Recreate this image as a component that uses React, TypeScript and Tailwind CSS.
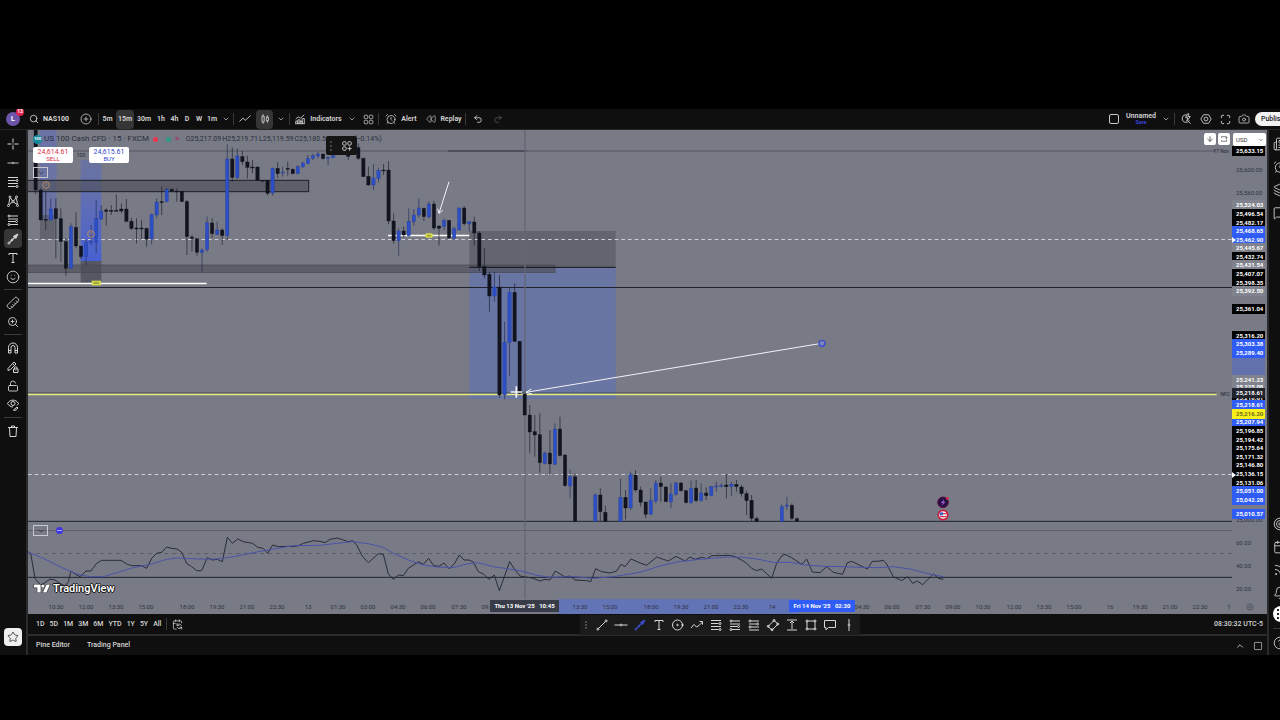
import type { ReactNode } from "react";
import {
  AlarmClock,
  ArrowDown,
  Bell,
  Calendar,
  CalendarSync,
  Camera,
  ChevronDown,
  ChevronUp,
  CircleHelp,
  CirclePlus,
  Layers,
  LockOpen,
  type LucideIcon,
  Maximize,
  MessageSquare,
  Newspaper,
  Redo2,
  Rewind,
  Ruler,
  Rss,
  Search,
  Smile,
  Star,
  Target,
  Undo2,
  ZoomIn,
} from "lucide-react";

/* ---------- icons ---------- */

// all of these are drawn on a 28 x 28 grid
const glyphs: Record<string, ReactNode> = {
  cross: <path d="M14 3v8M14 17v8M3 14h8M17 14h8M14 13.5v1M13.5 14h1" />,
  trend: (
    <>
      <path d="M7.5 20.5l13-13" />
      <circle cx="5.8" cy="22.2" r="2" />
      <circle cx="22.2" cy="5.8" r="2" />
    </>
  ),
  horizontal: (
    <>
      <path d="M1 14h11M16 14h11" />
      <circle cx="14" cy="14" r="1.8" />
    </>
  ),
  arrow: (
    <>
      <path d="M7.5 20.5L20 8" strokeWidth="2.4" />
      <path d="M15 8.5L24 4l-4.500 9z" fill="currentColor" />
      <circle cx="5.8" cy="22.2" r="2" />
      <circle cx="12" cy="16" r="1.6" fill="currentColor" />
    </>
  ),
  fib: (
    <>
      <path d="M4 5h20M4 11h15M4 17h20M4 23h15" />
      <circle cx="22" cy="11" r="2" />
      <circle cx="22" cy="23" r="2" />
    </>
  ),
  pattern: (
    <>
      <path d="M5.5 21l2-12M9 8l4 6M15 14l5-6M21 9l2 12M7 21l6-5M15 16l7 5" />
      <circle cx="5" cy="23" r="2" />
      <circle cx="8" cy="6" r="2" />
      <circle cx="14" cy="15" r="2" />
      <circle cx="21" cy="6" r="2" />
      <circle cx="23" cy="23" r="2" />
    </>
  ),
  position: (
    <>
      <path d="M8 6h16M4 12h20M4 17h14M8 23h16" />
      <circle cx="6" cy="6" r="2" />
      <circle cx="21" cy="17" r="2" />
      <circle cx="6" cy="23" r="2" />
    </>
  ),
  short: (
    <>
      <path d="M8 6h16M4 12h14M8 18h16M4 24h20" />
      <circle cx="6" cy="6" r="2" />
      <circle cx="21" cy="12" r="2" />
      <circle cx="6" cy="18" r="2" />
    </>
  ),
  text: <path d="M6 8V5h16v3M14 5v18M11 23h6" />,
  circle: (
    <>
      <circle cx="13" cy="14" r="10" />
      <circle cx="13" cy="14" r="1.5" />
      <circle cx="23" cy="14" r="1.5" fill="currentColor" />
    </>
  ),
  wave: <path d="M2 20l6-7 5 5 5-3 7-7M19 7h6v6" />,
  rotated: (
    <>
      <path d="M4 17L16 5l8 7-12 12z" />
      <circle cx="4.5" cy="16.5" r="2" />
      <circle cx="16" cy="5" r="2" />
      <circle cx="23.5" cy="12" r="2" />
      <circle cx="12" cy="23.5" r="2" />
    </>
  ),
  range: <path d="M4 4h20M4 24h20M14 6v16M10 10l4-4 4 4" />,
  rect: (
    <>
      <path d="M7 6h14M7 22h14M6 7v14M22 7v14" />
      <circle cx="6" cy="6" r="2" />
      <circle cx="22" cy="6" r="2" />
      <circle cx="6" cy="22" r="2" />
      <circle cx="22" cy="22" r="2" />
    </>
  ),
  callout: <path d="M3 5h22v14H11l-5 5v-5H3z" />,
  vertical: (
    <>
      <path d="M14 2v10M14 16v10" />
      <circle cx="14" cy="14" r="1.8" />
    </>
  ),
  magnet: <path d="M5 24V13a9 9 0 0 1 18 0v11h-5V13a4 4 0 0 0-8 0v11zM5 19h5M18 19h5" />,
  penLock: (
    <>
      <path d="M4 17L16 4l4 4L9 19l-5 2zM13 7l4 4" />
      <path d="M15 18h9v7h-9zM17 18v-2a2.5 2.5 0 0 1 5 0v2M19.5 21v1" />
    </>
  ),
  eye: (
    <>
      <path d="M3 11c5-9 17-9 22 0-1 2-2 3-3 4M3 11c3 5 7 7 11 7" />
      <circle cx="14" cy="11" r="4" />
      <path d="M15 24l7-6 2 2-6 5z" />
    </>
  ),
  trash: <path d="M4 7h20M11 7V4h6v3M7 7l1 18h12l1-18" />,
  line: <path d="M1 20l8-8 6 5L27 6" />,
  candles: <path d="M7 7h5v14H7zM9.500 3v4M9.500 21v4M17 10h5v8h-5zM19.500 5v5M19.500 18v5" />,
  indicators: <path d="M4 14l6-5 5 3 9-8M4 25v-6h5v6M9 25v-9h5v9M14 25v-6h5v6M19 25V13h5v12M3 25h22" />,
  layout: (
    <>
      <rect x="3" y="3" width="9" height="9" rx="3" />
      <rect x="16" y="3" width="9" height="9" rx="3" />
      <rect x="3" y="16" width="9" height="9" rx="3" />
      <rect x="16" y="16" width="9" height="9" rx="3" />
    </>
  ),
  grid: (
    <>
      <rect x="4" y="4" width="8" height="8" rx="2.5" />
      <rect x="16" y="4" width="8" height="8" rx="2.5" />
      <rect x="4" y="16" width="8" height="8" rx="2.5" />
      <path d="M20 15v10M15 20h10" />
    </>
  ),
  quick: <path d="M14 4a9 9 0 1 0 8 13M19 19l6 6M17 2l-4 9h5l-2 8 8-11h-6l3-6z" />,
  hex: (
    <>
      <path d="M8 4h12l6 10-6 10H8L2 14z" />
      <circle cx="14" cy="14" r="4.5" />
    </>
  ),
  full: <path d="M9 4h10M24 10v8M19 24H9M4 18v-8M4 10V6q0-2 2-2h3M19 4h3q2 0 2 2v4M24 18v4q0 2-2 2h-3M9 24H6q-2 0-2-2v-4" />,
  reset: <path d="M5 10V6h18v6M23 16v6H5v-4M19 9l4 3 3-3" />,
};

function Glyph({ name, className = "size-3.5" }: { name: string; className?: string }) {
  return (
    <svg
      viewBox="0 0 28 28"
      className={`shrink-0 ${className}`}
      fill="none"
      stroke="currentColor"
      strokeWidth="2"
      aria-hidden="true"
    >
      {glyphs[name]}
    </svg>
  );
}

/* ---------- chart data ---------- */

// [bar, high, body top, body bottom, low, rising]
type Candle = [number, number, number, number, number, 0 | 1];

const candles: Candle[] = [
  [0, 75, 75, 255, 268, 0], [1, 250, 255, 345, 345, 0], [2, 258, 343, 345, 375, 0],
  [3, 280, 312, 345, 345, 1], [4, 280, 311, 341, 460, 0], [5, 310, 341, 410, 470, 0],
  [6, 400, 410, 490, 512, 0], [7, 355, 365, 490, 492, 1], [8, 322, 367, 423, 430, 0],
  [9, 423, 423, 455, 462, 0], [10, 405, 412, 455, 480, 1], [11, 360, 410, 412, 420, 1],
  [12, 285, 340, 412, 445, 1], [13, 300, 318, 342, 345, 1], [14, 310, 315, 319, 362, 0],
  [15, 300, 316, 318, 330, 0], [16, 268, 316, 318, 318, 0], [17, 295, 312, 318, 325, 0],
  [18, 282, 312, 349, 352, 0], [19, 338, 349, 370, 375, 0], [20, 340, 369, 371, 415, 0],
  [21, 345, 369, 371, 402, 0], [22, 368, 370, 402, 425, 0], [23, 325, 329, 402, 418, 1],
  [24, 280, 291, 330, 340, 1], [25, 245, 290, 292, 330, 0], [26, 250, 252, 290, 292, 1],
  [27, 250, 253, 259, 262, 0], [28, 250, 258, 260, 290, 0], [29, 257, 259, 290, 290, 0],
  [30, 285, 290, 395, 450, 0], [31, 390, 396, 400, 440, 0], [32, 400, 401, 442, 452, 0],
  [33, 430, 435, 443, 500, 1], [34, 335, 353, 434, 440, 1], [35, 340, 354, 386, 398, 0],
  [36, 350, 375, 388, 390, 1], [37, 370, 375, 392, 420, 0], [38, 118, 162, 392, 405, 1],
  [39, 128, 162, 217, 230, 0], [40, 130, 153, 218, 222, 1], [41, 138, 155, 170, 180, 0],
  [42, 152, 171, 187, 220, 0], [43, 165, 186, 188, 205, 0], [44, 184, 186, 226, 228, 0],
  [45, 226, 226, 228, 228, 0], [46, 226, 226, 265, 272, 0], [47, 188, 190, 264, 272, 1],
  [48, 172, 190, 206, 220, 0], [49, 185, 201, 204, 215, 1], [50, 170, 190, 192, 212, 0],
  [51, 190, 193, 206, 208, 0], [52, 180, 185, 206, 208, 1], [53, 170, 174, 186, 188, 1],
  [54, 150, 160, 176, 178, 1], [55, 146, 152, 160, 166, 1], [56, 140, 147, 153, 160, 1],
  [57, 146, 147, 161, 163, 0], [58, 155, 157, 160, 180, 1], [59, 148, 152, 158, 160, 1],
  [62, 148, 150, 154, 165, 0], [64, 115, 128, 160, 165, 0], [65, 158, 160, 215, 216, 0],
  [66, 185, 214, 240, 242, 0], [67, 177, 219, 240, 255, 1], [68, 188, 196, 221, 232, 1],
  [69, 177, 195, 197, 210, 0], [70, 168, 195, 348, 358, 0], [71, 325, 348, 407, 415, 0],
  [72, 370, 378, 407, 452, 1], [73, 365, 378, 390, 398, 0], [74, 310, 349, 392, 395, 1],
  [75, 312, 330, 350, 362, 1], [76, 280, 309, 330, 338, 1], [77, 308, 310, 335, 348, 0],
  [78, 290, 297, 336, 340, 1], [79, 288, 297, 369, 375, 0], [80, 362, 363, 370, 422, 0],
  [81, 340, 346, 364, 375, 1], [82, 345, 346, 399, 402, 0], [83, 365, 371, 400, 405, 1],
  [84, 308, 309, 375, 375, 1], [85, 303, 309, 356, 362, 0], [86, 348, 350, 357, 380, 1],
  [87, 335, 351, 384, 422, 0], [88, 378, 384, 485, 498, 0], [89, 430, 485, 510, 520, 0],
  [90, 500, 508, 573, 620, 0], [91, 500, 546, 573, 590, 1], [92, 510, 546, 870, 878, 0],
  [93, 650, 712, 870, 883, 1], [94, 550, 562, 712, 813, 1], [95, 535, 562, 709, 710, 0],
  [96, 708, 709, 865, 868, 0], [97, 865, 867, 930, 932, 0], [98, 900, 930, 981, 1045, 0],
  [99, 930, 980, 990, 1055, 0], [100, 925, 989, 1073, 1103, 0], [101, 1040, 1044, 1075, 1078, 1],
  [102, 975, 1044, 1077, 1110, 0], [103, 955, 972, 1078, 1080, 1], [104, 935, 972, 1052, 1055, 0],
  [105, 1048, 1050, 1142, 1145, 0], [106, 1093, 1115, 1143, 1180, 1], [107, 1105, 1115, 1249, 1249, 0],
  [111, 1165, 1170, 1249, 1249, 1], [112, 1150, 1170, 1220, 1249, 0], [113, 1202, 1222, 1249, 1249, 0],
  [116, 1120, 1177, 1249, 1249, 1], [117, 1155, 1177, 1209, 1243, 0], [118, 1100, 1108, 1209, 1215, 1],
  [119, 1095, 1110, 1155, 1162, 0], [120, 1145, 1155, 1192, 1205, 0], [121, 1190, 1191, 1228, 1240, 0],
  [122, 1150, 1186, 1228, 1230, 1], [123, 1125, 1134, 1188, 1195, 1], [124, 1115, 1134, 1145, 1190, 0],
  [125, 1144, 1146, 1190, 1192, 0], [126, 1135, 1167, 1191, 1210, 1], [127, 1130, 1134, 1168, 1172, 1],
  [128, 1130, 1134, 1157, 1160, 0], [129, 1155, 1157, 1193, 1195, 0], [130, 1127, 1150, 1193, 1197, 1],
  [131, 1125, 1149, 1187, 1192, 0], [132, 1135, 1164, 1187, 1190, 1], [133, 1147, 1164, 1172, 1185, 0],
  [134, 1143, 1145, 1172, 1174, 1], [135, 1130, 1143, 1145, 1160, 1], [136, 1135, 1141, 1144, 1147, 1],
  [137, 1107, 1140, 1145, 1180, 0], [138, 1130, 1138, 1145, 1173, 1], [139, 1125, 1138, 1145, 1160, 0],
  [140, 1140, 1146, 1166, 1175, 0], [141, 1157, 1166, 1187, 1230, 0], [142, 1170, 1186, 1240, 1249, 0],
  [143, 1235, 1241, 1249, 1249, 0], [148, 1198, 1205, 1249, 1249, 1], [149, 1175, 1200, 1204, 1215, 1],
  [150, 1195, 1201, 1240, 1245, 0], [151, 1238, 1241, 1249, 1249, 0],
];

const rsi =
  "84,1340 92,1345 105,1420 122,1440 135,1433 150,1422 165,1425 180,1435 195,1443 205,1430 213,1398 225,1407 240,1415 258,1398 273,1398 290,1375 305,1366 363,1366 380,1377 395,1382 425,1382 440,1390 455,1360 470,1345 485,1342 500,1326 515,1330 531,1332 545,1342 560,1375 575,1385 590,1397 605,1397 622,1358 637,1365 652,1363 667,1370 682,1297 697,1315 713,1302 730,1310 758,1315 773,1327 790,1330 803,1345 818,1320 834,1325 864,1324 880,1325 895,1322 910,1315 940,1307 960,1309 975,1313 990,1303 1012,1299 1030,1305 1045,1310 1058,1307 1070,1320 1088,1355 1105,1373 1135,1346 1150,1348 1165,1407 1180,1423 1195,1410 1210,1412 1225,1390 1240,1380 1255,1370 1270,1378 1286,1360 1301,1382 1317,1384 1332,1374 1347,1391 1362,1378 1378,1350 1392,1365 1407,1365 1420,1371 1435,1400 1450,1407 1467,1423 1483,1410 1498,1457 1513,1415 1529,1370 1545,1395 1560,1413 1600,1420 1620,1428 1635,1423 1650,1425 1666,1398 1695,1416 1710,1413 1725,1425 1760,1427 1772,1430 1787,1391 1805,1400 1830,1404 1850,1398 1863,1378 1875,1385 1893,1362 1923,1375 1940,1381 1970,1356 1990,1363 2005,1368 2028,1354 2055,1368 2070,1356 2085,1363 2105,1357 2120,1361 2135,1352 2190,1351 2205,1355 2225,1365 2240,1375 2255,1390 2270,1397 2285,1392 2315,1420 2330,1375 2345,1353 2355,1348 2375,1358 2405,1378 2420,1362 2437,1401 2460,1403 2480,1385 2500,1402 2528,1408 2542,1373 2555,1369 2580,1381 2602,1392 2617,1369 2632,1369 2650,1366 2660,1377 2680,1415 2705,1427 2723,1415 2738,1435 2752,1428 2768,1439 2800,1407 2815,1420 2830,1423";

const rsiAverage =
  "85,1342 130,1360 180,1385 230,1407 270,1415 310,1415 350,1403 400,1388 450,1378 500,1363 530,1359 590,1362 650,1362 700,1355 760,1343 820,1332 880,1322 960,1321 1010,1315 1060,1310 1110,1317 1150,1327 1180,1345 1230,1367 1270,1380 1310,1386 1360,1388 1400,1377 1435,1373 1480,1385 1520,1391 1570,1399 1610,1411 1650,1417 1690,1416 1720,1415 1780,1420 1840,1415 1920,1402 1980,1383 2030,1371 2080,1365 2130,1360 2180,1356 2230,1357 2270,1362 2320,1372 2370,1372 2420,1380 2470,1384 2530,1385 2580,1387 2640,1388 2680,1385 2730,1392 2780,1405 2830,1415";

const times: [number, string][] = [
  [56, "10:30"], [86, "12:00"], [116, "13:30"], [146, "15:00"], [187, "18:00"], [217, "19:30"],
  [247, "21:00"], [277, "22:30"], [308, "13"], [338, "01:30"], [368, "03:00"], [398, "04:30"],
  [428, "06:00"], [459, "07:30"], [489, "09:00"], [580, "13:30"], [610, "15:00"], [651, "18:00"],
  [681, "19:30"], [711, "21:00"], [741, "22:30"], [772, "14"], [862, "04:30"], [892, "06:00"],
  [923, "07:30"], [953, "09:00"], [983, "10:30"], [1014, "12:00"], [1044, "13:30"], [1074, "15:00"],
  [1110, "16"], [1140, "19:30"], [1170, "21:00"], [1200, "22:30"], [1229, "1"],
];

const tones = {
  plain: "text-[#2e323e]",
  gray: "bg-[#80838d] font-bold text-white",
  black: "bg-black font-bold text-white",
  blue: "bg-[#2f5cf5] font-bold text-white",
  yellow: "bg-[#f7f01c] font-bold text-[#6b6a1a]",
  cursor: "bg-[#20242f] font-bold text-white",
};

const prices: [number, string, keyof typeof tones][] = [
  [151, "25,633.15", "black"], [170, "25,600.00", "plain"], [193, "25,560.00", "plain"],
  [205, "25,524.03", "gray"], [214, "25,496.54", "black"], [223, "25,482.17", "black"],
  [231, "25,468.65", "blue"], [240, "25,462.90", "blue"], [248, "25,445.67", "gray"],
  [257, "25,432.74", "black"], [265, "25,431.54", "gray"], [274, "25,407.07", "black"],
  [283, "25,398.35", "black"], [291, "25,392.50", "gray"], [309, "25,361.04", "black"],
  [336, "25,316.20", "black"], [344, "25,303.38", "blue"], [353, "25,289.40", "blue"],
  [380, "25,241.23", "gray"], [387, "25,225.08", "gray"], [398, "25,218.61", "black"],
  [393, "25,218.61", "cursor"], [405, "25,218.61", "blue"], [422, "25,207.94", "blue"],
  [414, "25,216.20", "yellow"], [431, "25,196.85", "black"], [440, "25,194.42", "black"],
  [448, "25,175.64", "black"], [457, "25,171.32", "black"], [465, "25,146.80", "black"],
  [474, "25,136.15", "black"], [483, "25,131.06", "black"], [491, "25,051.00", "blue"],
  [500, "25,042.28", "blue"], [520, "25,000.00", "plain"], [514, "25,010.57", "blue"],
  [543, "60.00", "plain"], [566, "40.00", "plain"], [589, "20.00", "plain"],
];

/* ---------- header ---------- */

function HeaderButton({
  label,
  className,
  children,
}: {
  label: string;
  className: string;
  children: ReactNode;
}) {
  return (
    <button
      type="button"
      aria-label={label}
      className={`flex h-[19px] shrink-0 items-center justify-center gap-1 rounded-sm ${className}`}
    >
      {children}
    </button>
  );
}

function Divider() {
  return <div className="h-3 w-px shrink-0 bg-[#3a3a3a]" />;
}

const intervals: [string, string][] = [
  ["5m", "w-[17px]"],
  ["15m", "w-[18px] bg-[#363636]"],
  ["30m", "w-[20px]"],
  ["1h", "w-[14px]"],
  ["4h", "w-[13px]"],
  ["D", "w-[12px]"],
  ["W", "w-[12px]"],
  ["1m", "w-[14px]"],
];

function Header() {
  return (
    <header className="flex h-[21px] shrink-0 items-center overflow-hidden border-b border-[#262626] bg-[#0f0f0f] text-[7px] font-semibold">
      <div className="relative ml-[6px] grid size-3.5 shrink-0 place-content-center rounded-full bg-[#6c55a8] text-[8px] text-white">
        L
        <span className="absolute -top-1 left-[10px] grid size-2 place-content-center rounded-full bg-[#e0214f] text-[5px]">
          13
        </span>
      </div>
      <HeaderButton label="Symbol search" className="ml-2.5 w-[38px] font-bold">
        <Search className="size-2.5 shrink-0" />
        NAS100
      </HeaderButton>
      <HeaderButton label="Compare symbols" className="ml-2 w-[20px]">
        <CirclePlus className="size-3" strokeWidth={1.5} />
      </HeaderButton>
      <div className="w-0.5 shrink-0" />
      <Divider />
      {intervals.map(([name, width]) => (
        <HeaderButton key={name} label={name} className={width}>
          {name}
        </HeaderButton>
      ))}
      <HeaderButton label="More intervals" className="w-[14px]">
        <ChevronDown className="size-2" />
      </HeaderButton>
      <Divider />
      <HeaderButton label="Line" className="w-[22px]">
        <Glyph name="line" className="size-3" />
      </HeaderButton>
      <HeaderButton label="Candles" className="w-[17px] bg-[#363636]">
        <Glyph name="candles" className="size-3" />
      </HeaderButton>
      <HeaderButton label="Chart types" className="w-[16px]">
        <ChevronDown className="size-2" />
      </HeaderButton>
      <Divider />
      <HeaderButton label="Indicators" className="w-[56px]">
        <Glyph name="indicators" className="size-3" />
        Indicators
      </HeaderButton>
      <HeaderButton label="Favorite indicators" className="w-[12px]">
        <ChevronDown className="size-2" />
      </HeaderButton>
      <HeaderButton label="Templates" className="w-[20px]">
        <Glyph name="layout" className="size-[11px]" />
      </HeaderButton>
      <Divider />
      <HeaderButton label="Alert" className="w-[44px]">
        <AlarmClock className="size-3" strokeWidth={1.5} />
        Alert
      </HeaderButton>
      <HeaderButton label="Replay" className="w-[42px]">
        <Rewind className="size-2.5" strokeWidth={1.5} />
        Replay
      </HeaderButton>
      <Divider />
      <HeaderButton label="Undo" className="w-[24px]">
        <Undo2 className="size-2.5" />
      </HeaderButton>
      <HeaderButton label="Redo" className="w-[16px] text-[#555]">
        <Redo2 className="size-2.5" />
      </HeaderButton>

      <div className="ml-auto flex shrink-0 items-center">
        <HeaderButton label="Layout setup" className="w-[14px]">
          <span className="size-2.5 rounded-xs border border-[#c8c8c8]" />
        </HeaderButton>
        <button type="button" className="w-[40px] text-center text-[7px] leading-[7px]">
          Unnamed
          <span className="block text-[5px] leading-[5px] text-[#3b45e8]">Save</span>
        </button>
        <HeaderButton label="Manage layouts" className="w-[10px]">
          <ChevronDown className="size-2" />
        </HeaderButton>
        <div className="w-[3px]" />
        <Divider />
        <HeaderButton label="Quick search" className="w-[22px]">
          <Glyph name="quick" className="size-3" />
        </HeaderButton>
        <HeaderButton label="Settings" className="w-[18px]">
          <Glyph name="hex" className="size-3" />
        </HeaderButton>
        <HeaderButton label="Fullscreen" className="w-[20px]">
          <Maximize className="size-[11px]" strokeWidth={2} />
        </HeaderButton>
        <HeaderButton label="Snapshot" className="w-[18px]">
          <Camera className="size-3" strokeWidth={1.5} />
        </HeaderButton>
        <button
          type="button"
          className="ml-[2px] h-[14px] w-[25px] overflow-hidden rounded-l-full bg-[#f2f2f2] pl-1.5 text-left text-[7px] font-medium text-[#1a1a1a]"
        >
          Publish
        </button>
      </div>
    </header>
  );
}

/* ---------- left toolbar ---------- */

function Tool({ label, active, children }: { label: string; active?: boolean; children: ReactNode }) {
  return (
    <button
      type="button"
      aria-label={label}
      className={`grid h-[19px] w-[18px] shrink-0 place-content-center rounded-sm ${active ? "bg-[#363636]" : ""}`}
    >
      {children}
    </button>
  );
}

function ToolDivider() {
  return <div className="my-[3px] h-px w-[18px] shrink-0 bg-[#3a3a3a]" />;
}

function LeftToolbar() {
  return (
    <aside className="flex w-[28px] shrink-0 flex-col items-center border-r-2 border-[#2b2b2e] bg-[#0f0f0f] pt-1">
      <Tool label="Cursor"><Glyph name="cross" /></Tool>
      <Tool label="Lines"><Glyph name="horizontal" className="size-3" /></Tool>
      <Tool label="Fibonacci"><Glyph name="fib" /></Tool>
      <Tool label="Patterns"><Glyph name="pattern" /></Tool>
      <Tool label="Positions"><Glyph name="position" /></Tool>
      <Tool label="Arrow" active><Glyph name="arrow" /></Tool>
      <Tool label="Text"><Glyph name="text" /></Tool>
      <Tool label="Icons"><Smile className="size-3.5" strokeWidth={1.5} /></Tool>
      <ToolDivider />
      <Tool label="Measure"><Ruler className="size-3.5 rotate-90" strokeWidth={1.5} /></Tool>
      <Tool label="Zoom in"><ZoomIn className="size-3" strokeWidth={1.8} /></Tool>
      <ToolDivider />
      <Tool label="Magnet"><Glyph name="magnet" /></Tool>
      <Tool label="Keep drawing"><Glyph name="penLock" /></Tool>
      <Tool label="Lock drawings"><LockOpen className="size-3" strokeWidth={1.8} /></Tool>
      <Tool label="Hide drawings"><Glyph name="eye" /></Tool>
      <ToolDivider />
      <Tool label="Remove"><Glyph name="trash" /></Tool>
      <button
        type="button"
        aria-label="Favorite tools"
        className="mt-auto mb-[9px] grid size-[18px] place-content-center rounded-sm bg-[#f0f0f0] text-[#222]"
      >
        <Star className="size-3" strokeWidth={1.5} />
      </button>
    </aside>
  );
}

/* ---------- chart ---------- */

function ChartCanvas() {
  return (
    <svg
      viewBox="84 75 3612 1407"
      preserveAspectRatio="none"
      className="absolute inset-0 h-full w-full"
      aria-label="US 100 15 minute chart"
    >
      <defs>
        <linearGradient id="zone" x1="0" y1="0" x2="0" y2="1">
          <stop offset="0" stopColor="#4c63d8" stopOpacity="0.3" />
          <stop offset="0.4" stopColor="#4c63d8" stopOpacity="0.55" />
          <stop offset="1" stopColor="#3f5ce0" stopOpacity="0.85" />
        </linearGradient>
      </defs>

      <rect x="120" y="75" width="50" height="270" fill="#5468cf" fillOpacity="0.4" />
      <rect x="120" y="330" width="44" height="72" fill="#4a4c55" fillOpacity="0.5" />
      <rect x="242" y="165" width="62" height="303" fill="url(#zone)" />
      <rect x="242" y="468" width="62" height="66" fill="#4a4c55" fillOpacity="0.75" />
      <rect x="1408" y="378" width="439" height="109" fill="#55575f" fillOpacity="0.6" />
      <rect x="1408" y="487" width="439" height="395" fill="#5a6fc0" fillOpacity="0.5" />
      <rect x="80" y="226" width="846" height="34" fill="#4b4b54" fillOpacity="0.6" stroke="#1d1f28" strokeWidth="3" />
      <rect x="84" y="480" width="1581" height="23" fill="#4b4b54" fillOpacity="0.6" stroke="#454853" strokeWidth="2" />

      <g stroke="#20232e" strokeWidth="3">
        <path d="M84 138H3650" strokeWidth="2" stroke="#3f424d" />
        <path d="M1343 138H1580" strokeWidth="2" />
        <path d="M84 547.500H3696" />
        <path d="M84 863.500H3650" strokeWidth="2" stroke="#3d4048" />
        <path d="M1408 487H1847" stroke="#12141d" />
        <path d="M84 1249H3696" />
        <path d="M84 1276.500H3696" stroke="#5b5e69" />
        <path d="M84 1417H3696" />
      </g>
      <path d="M84 1345.500H3696" stroke="#5d606b" strokeWidth="3" strokeDasharray="13 11" />
      <path d="M1575 75V1482" stroke="#646772" strokeWidth="4" />
      <path d="M84 868.500H3650" stroke="#e6ea7a" strokeWidth="5" />
      <path
        d="M84 403.500H3696M84 1108.500H3696"
        stroke="#cfd0d6"
        strokeWidth="3"
        strokeDasharray="11 9"
      />
      <path d="M84 535.500H620M1164 391.500H1408" stroke="#fff" strokeWidth="4" />

      {candles.map(([bar, high, top, bottom, low, rising]) => {
        const x = 107 + bar * 15.125;
        return (
          <g key={bar}>
            <path d={`M${x} ${high}V${low}`} stroke={rising ? "#262b58" : "#1b1d26"} strokeWidth="2" />
            <rect
              x={x - 5}
              y={top}
              width="10"
              height={Math.max(bottom - top, 3)}
              fill={rising ? "#2d4fc6" : "#11131f"}
              stroke={rising ? "#253a94" : "#11131f"}
              strokeWidth="1"
            />
          </g>
        );
      })}

      <polyline points={rsi} fill="none" stroke="#292c39" strokeWidth="3" />
      <polyline points={rsiAverage} fill="none" stroke="#4a53a8" strokeWidth="3" />

      <g fill="#d6dc4c">
        <rect x="275" y="527" width="28" height="14" />
        <rect x="1275" y="385" width="24" height="13" rx="6" />
      </g>
      <path d="M281 534h16M1281 392h12" stroke="#8f943a" strokeWidth="4" />

      <g fill="none" stroke="#b58b62" strokeWidth="3">
        <circle cx="138" cy="240" r="10" />
        <circle cx="273" cy="387" r="10" />
        <path d="M138 234v8M273 381v8" />
      </g>

      <g fill="none" stroke="#f2f3f7" strokeWidth="3">
        <path d="M2459 716L1578 862M1594 852L1578 862L1596 867" />
        <path d="M1347 230L1317 325M1313 311L1317 325L1328 316" />
        <path d="M1549 844V878M1532 861H1566" strokeWidth="5" />
      </g>
      <circle cx="2466" cy="715" r="9" fill="#7e85b8" stroke="#3a4bd0" strokeWidth="4" />

      <circle cx="2829" cy="1192" r="16" fill="#2a1040" stroke="#5c1246" strokeWidth="3" />
      <path d="M2833 1182l-11 12h7l-4 9 12-13h-7z" fill="#9a62d8" />
      <circle cx="2842" cy="1180" r="4" fill="#e0284f" />
      <circle cx="2829" cy="1230" r="14" fill="#f1eef4" stroke="#c81e3c" strokeWidth="5" />
      <path d="M2829 1226h11M2820 1235h19" stroke="#d8364e" strokeWidth="4" />
      <path d="M2819 1222h10v9h-10z" fill="#4c62c4" />
    </svg>
  );
}

function Legend() {
  return (
    <div className="relative flex flex-col items-start pl-[5px] pt-1">
      <div className="flex h-2.5 items-center text-[8px] leading-[10px] whitespace-nowrap text-[#2a2d38]">
        <span className="mr-0.5 grid size-[9px] place-content-center rounded-full bg-[#128a9c] text-[4px] font-bold text-white">
          100
        </span>
        US 100 Cash CFD · 15 · FXCM
        <span className="ml-1 size-[5px] rounded-full bg-[#f0344f]" />
        <span className="ml-2 size-[5px] rounded-full bg-[#2f9a86]" />
        <span className="ml-1 text-[8px] font-bold text-[#a3305f]">≈</span>
        <span className="ml-1.5 flex gap-px text-[7px]">
          <span>O25,217.09</span>
          <span>H25,219.71</span>
          <span>L25,119.59</span>
          <span>C25,180.51</span>
          <span>−36.58 (−0.14%)</span>
        </span>
      </div>
      <div className="mt-[3px] flex items-center text-center text-[7px] leading-[7px]">
        <button type="button" className="h-4 w-10 rounded-xs bg-white text-[#d92f45]">
          24,614.61
          <span className="block text-[6px] leading-[6px]">SELL</span>
        </button>
        <span className="w-4 text-[5px] text-[#22252f]">100</span>
        <button type="button" className="h-4 w-10 rounded-xs bg-white text-[#3048c8]">
          24,615.61
          <span className="block text-[6px] leading-[6px]">BUY</span>
        </button>
      </div>
      <button
        type="button"
        aria-label="Collapse legend"
        className="mt-1 grid h-[11px] w-[15px] place-content-center border border-[#c9cad0] text-[#2a2d38]"
      >
        <ChevronDown className="size-2" />
      </button>
    </div>
  );
}

function Chart() {
  return (
    <div className="grid min-h-0 flex-1 grid-cols-[minmax(0,1fr)_35px] grid-rows-[minmax(0,1fr)_15px] bg-[#787b86] text-[6px]">
      <div className="relative overflow-hidden">
        <ChartCanvas />
        <Legend />

        <div className="absolute top-[6px] left-[298px] flex h-[19px] w-[31px] items-center justify-between rounded-xs bg-[#151515] pr-1 pl-1 text-[#d8d8d8]">
          <span className="h-2.5 border-l-2 border-dotted border-[#444]" />
          <Glyph name="grid" className="size-3" />
        </div>

        <div className="absolute top-[3px] right-[2px] flex gap-0.5 text-[#222]">
          <button type="button" aria-label="Scroll to last bar" className="grid size-3 place-content-center rounded-xs bg-white">
            <ArrowDown className="size-2" />
          </button>
          <button type="button" aria-label="Reset scale" className="grid size-3 place-content-center rounded-xs bg-white">
            <Glyph name="reset" className="size-2" />
          </button>
        </div>
        <span className="absolute top-[18px] right-[3px] text-[5px] leading-[6px] text-[#22252f]">17 Nov</span>
        <span className="absolute top-[261px] right-[2px] bg-[#787b86] pl-px text-[5px] leading-[6px] text-[#22252f]">
          NFC
        </span>

        <div className="absolute bottom-[63px] left-[5px] flex items-center gap-2">
          <button
            type="button"
            aria-label="Collapse indicator"
            className="grid h-[11px] w-[15px] place-content-center border border-[#c9cad0] text-[#2a2d38]"
          >
            <ChevronDown className="size-2" />
          </button>
          <span className="grid size-[7px] place-content-center rounded-full bg-[#3f35e0]">
            <span className="h-px w-[5px] bg-[#a8a5f0]" />
          </span>
        </div>

        <a
          href="#tradingview"
          className="absolute bottom-1 left-[6px] flex items-center gap-[3px] text-[11px] leading-[13px] font-semibold text-white [text-shadow:1px_0_#111,-1px_0_#111,0_1px_#111,0_-1px_#111]"
        >
          <svg viewBox="0 0 36 20" className="h-[9px] w-[16px] overflow-visible" fill="#fff" stroke="#111" strokeWidth="2" paintOrder="stroke">
            <path d="M0 1h15v18H7.500V8H0z" />
            <circle cx="20" cy="4.500" r="3.700" />
            <path d="M28 1h8l-8 18h-8z" />
          </svg>
          TradingView
        </a>
      </div>

      {/* price scale */}
      <div className="relative overflow-hidden">
        <div className="absolute top-[48%] h-[9%] w-[33px] bg-[#6271ab]" />
        {prices.map(([y, value, tone]) => (
          <span
            key={y}
            className={`absolute left-0 -mt-[5px] h-[10px] w-[33px] pl-1 leading-[10px] ${tones[tone]}`}
            style={{ top: `${((y - 130) / 469) * 100}%` }}
          >
            {value}
          </span>
        ))}
        <span className="absolute top-[107px] left-0 border-y-3 border-l-4 border-y-transparent border-l-white" />
        <span className="absolute top-[342px] left-0 border-y-3 border-l-4 border-y-transparent border-l-white" />
        <select
          aria-label="Currency"
          className="absolute top-[3px] left-px h-[13px] w-[33px] appearance-none rounded-xs bg-white pl-[3px] text-[6px] text-[#333]"
        >
          <option>USD</option>
        </select>
        <ChevronDown className="absolute top-[7px] left-[26px] size-1.5 text-[#222]" />
      </div>

      {/* time scale */}
      <div className="relative overflow-hidden text-[#2e323e]">
        <div className="absolute inset-y-0 left-[44%] w-[20%] bg-[#6374b6]" />
        {times.map(([x, label]) => (
          <span
            key={x}
            className="absolute top-0.5 -ml-2.5 w-5 text-center leading-[12px]"
            style={{ left: `${((x - 28) / 1204) * 100}%` }}
          >
            {label}
          </span>
        ))}
        <span className="absolute top-px left-[462px] w-[69px] bg-[#383c49] text-center leading-[12px] font-bold whitespace-pre text-white">
          {"Thu 13 Nov '25   10:45"}
        </span>
        <span className="absolute top-px left-[761px] w-[66px] bg-[#2f5cf5] text-center leading-[12px] font-bold whitespace-pre text-white">
          {"Fri 14 Nov '25   02:30"}
        </span>
      </div>
      <button type="button" aria-label="Scale settings" className="grid place-content-center text-[#3a3e4b]">
        <Glyph name="hex" className="size-2" />
      </button>
    </div>
  );
}

/* ---------- bottom bars ---------- */

const ranges = ["1D", "5D", "1M", "3M", "6M", "YTD", "1Y", "5Y", "All"];

const favorites = [
  "trend", "horizontal", "arrow", "text", "circle", "wave", "fib",
  "position", "short", "rotated", "range", "rect", "callout", "vertical",
];

function RangeBar() {
  return (
    <div className="relative flex h-[22px] shrink-0 items-center border-b-2 border-[#2b2b2e] bg-[#0f0f0f] pl-2 text-[7px] font-medium">
      <div className="flex items-center gap-[5px]">
        {ranges.map((range) => (
          <button key={range} type="button">
            {range}
          </button>
        ))}
        <Divider />
        <button type="button" aria-label="Go to date">
          <CalendarSync className="size-[11px]" strokeWidth={1.6} />
        </button>
      </div>
      <div className="absolute top-px left-[552px] flex h-5 items-center bg-[#1b1b1c] pr-0.5 pl-[5px]">
        <span className="mr-[5px] h-2 border-l-2 border-dotted border-[#4a4a4a]" />
        {favorites.map((name) => (
          <button
            key={name}
            type="button"
            aria-label={name}
            className={`grid w-[19px] place-content-center ${name === "arrow" ? "text-[#3c4ccc]" : ""}`}
          >
            <Glyph name={name} />
          </button>
        ))}
      </div>
      <span className="ml-auto pr-1">08:30:32 UTC-5</span>
    </div>
  );
}

function PanelBar() {
  return (
    <footer className="flex h-[19px] shrink-0 items-center bg-[#0f0f0f] pr-1 pl-2 text-[7px] font-medium">
      <button type="button" className="mr-[17px]">Pine Editor</button>
      <button type="button">Trading Panel</button>
      <div className="ml-auto flex items-center gap-2">
        <button type="button" aria-label="Open panel"><ChevronUp className="size-2.5" /></button>
        <button type="button" aria-label="Maximize panel"><Glyph name="full" className="size-2.5" /></button>
      </div>
    </footer>
  );
}

/* ---------- right sidebar ---------- */

const upper: [string, LucideIcon][] = [
  ["Watchlist", Newspaper],
  ["Alerts", AlarmClock],
  ["Object tree", Layers],
  ["Chats", MessageSquare],
];

const lower: [string, LucideIcon][] = [
  ["Screener", Target],
  ["Calendar", Calendar],
  ["Community", Rss],
  ["Notifications", Bell],
];

function SideButtons({ items }: { items: [string, LucideIcon][] }) {
  return items.map(([label, Icon]) => (
    <button key={label} type="button" aria-label={label} className="h-[23px] w-4 shrink-0">
      <Icon className="size-[14px]" strokeWidth={1.5} />
    </button>
  ));
}

function RightSidebar() {
  return (
    <aside className="flex w-[13px] shrink-0 flex-col overflow-hidden border-l-2 border-[#2b2b2e] bg-[#0f0f0f] pt-[2px] pl-1">
      <SideButtons items={upper} />
      <div className="mt-auto" />
      <SideButtons items={lower} />
      <button
        type="button"
        aria-label="Products"
        className="mt-0.5 grid size-4 shrink-0 grid-cols-3 place-content-center gap-0.5 rounded-full bg-white px-1"
      >
        {Array.from({ length: 9 }, (_, i) => (
          <span key={i} className="size-[2px] bg-[#222]" />
        ))}
      </button>
      <div className="my-[6px] h-px w-4 shrink-0 bg-[#3a3a3a]" />
      <button type="button" aria-label="Help" className="mb-1 h-4 w-4 shrink-0">
        <CircleHelp className="size-[14px]" strokeWidth={1.5} />
      </button>
    </aside>
  );
}

export default function App() {
  return (
    <div className="flex h-screen flex-col bg-black pt-[109px] pb-[65px] font-[Roboto,sans-serif] text-[#d6d6d6]">
      <Header />
      <div className="flex min-h-0 flex-1">
        <LeftToolbar />
        <main className="flex min-w-0 flex-1 flex-col">
          <Chart />
          <RangeBar />
          <PanelBar />
        </main>
        <RightSidebar />
      </div>
    </div>
  );
}
